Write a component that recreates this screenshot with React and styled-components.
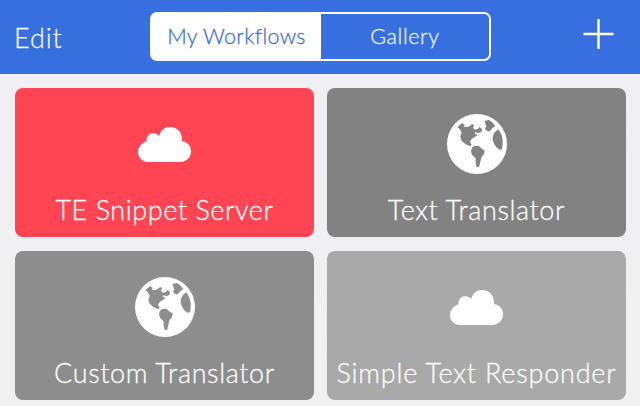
import React from 'react';
import styled, { createGlobalStyle } from 'styled-components';

const GlobalStyle = createGlobalStyle`
  * { box-sizing: border-box; }
  body { margin: 0; background: #f0f0f2; }
`;

const Screen = styled.div`
  width: 640px;
  height: 406px;
  overflow: hidden;
  display: flex;
  flex-direction: column;
  background: linear-gradient(#efeff5, #f0f0f2 60%, #f1f1f1);
  font-family: Lato, 'Liberation Sans', sans-serif;
  font-weight: 300;
  color: #fff;
`;

const NavBar = styled.header`
  flex: none;
  height: 74px;
  padding: 0 26px 0 14px;
  display: grid;
  grid-template-columns: 136px 341px 1fr;
  align-items: start;
  background: #386fde;
  border-bottom: 1px solid #3b69c4;
`;

const TextButton = styled.button`
  padding: 0;
  margin-top: 21px;
  border: 0;
  background: none;
  color: #f1f5fd;
  font: inherit;
  font-size: 27px;
  line-height: 34px;
  letter-spacing: ${(p) => p.$tracking};
  text-align: left;
  -webkit-text-stroke: 0.3px currentColor;
`;

const Segments = styled.div`
  margin-top: 12px;
  height: 49px;
  display: grid;
  grid-template-columns: 169px 168px;
  border: 2px solid #f8faff;
  border-radius: 7px;
`;

const Segment = styled.button`
  padding: 0 0 1px;
  border: 0;
  background: ${(p) => (p.$active ? '#fff' : 'none')};
  color: ${(p) => (p.$active ? '#3f70cf' : '#eaf1fd')};
  font: inherit;
  font-size: 21.5px;
  line-height: 28px;
  letter-spacing: ${(p) => p.$tracking};
  white-space: nowrap;
  -webkit-text-stroke: 0.3px currentColor;
`;

const AddButton = styled.button`
  justify-self: end;
  margin-top: 18px;
  padding: 0;
  border: 0;
  background: none;
  line-height: 0;
`;

const Grid = styled.main`
  padding: 14px 14px 0 15px;
  display: grid;
  grid-template-columns: 299px 299px;
  grid-auto-rows: 149px;
  gap: 14px 13px;
`;

const Card = styled.article`
  display: flex;
  flex-direction: column;
  align-items: center;
  min-width: 0;
  border-radius: 8px;
  background: ${(p) => p.$color};
`;

const IconArea = styled.div`
  height: 104.5px;
  padding-top: 8px;
  display: flex;
  align-items: center;
  justify-content: center;
`;

const CardTitle = styled.h2`
  margin: 0;
  font-size: 27px;
  font-weight: 300;
  line-height: 34px;
  letter-spacing: ${(p) => p.$tracking};
  white-space: nowrap;
  color: #fbfbfb;
  -webkit-text-stroke: 0.3px currentColor;
`;

const Cloud = () => (
  <svg width="53" height="35" viewBox="0 0 159 105" fill="#fff">
    <path d="M30 105C13 105 0 92 0 75C0 61 10 48 26 43C24 29 33 19 46 19C53 19 59 22 63 27C69 9 80 0 96 0C119 0 134 18 132 42C149 44 159 57 159 73C159 91 145 105 128 105Z" />
  </svg>
);

const Globe = ({ land }) => (
  <svg width="60" height="60" viewBox="36 28 180 180">
    <circle cx="126" cy="118" r="90" fill="#fff" />
    <g fill={land}>
      <path d="M67 68L81 55L89 61L86 66L99 67L111 59L118 60L114 69L119 75L128 73L134 67L141 74L140 81L131 85L121 83L119 87L128 91L119 97L110 103L105 111L110 121L105 125L96 120L87 115L79 107L76 96L80 84L74 73Z" />
      <path d="M112 128L120 123L132 124L140 132L149 137L147 148L140 156L136 171L132 188L125 186L122 174L122 161L111 150L108 139Z" />
      <path d="M148 49L161 46L171 52L181 65L173 69L167 77L160 81L150 73L154 65Z" />
      <path d="M190 74C180 80 174 88 173 99C172 111 179 119 184 128L194 135L201 134C206 111 203 91 190 74Z" />
    </g>
  </svg>
);

const Plus = () => (
  <svg width="31" height="32" viewBox="0 0 31 32" fill="none" stroke="#fff" strokeWidth="2.4">
    <path d="M0.5 16H30.5M15.5 1V31" />
  </svg>
);

const workflows = [
  { title: 'TE Snippet Server', color: '#ff4453', icon: 'cloud', tracking: '0.55px' },
  { title: 'Text Translator', color: '#828282', icon: 'globe', tracking: '0.6px' },
  { title: 'Custom Translator', color: '#8d8d8d', icon: 'globe', tracking: '0.6px' },
  { title: 'Simple Text Responder', color: '#a9a9a9', icon: 'cloud', tracking: '0.8px' },
];

export default function App() {
  return (
    <>
      <GlobalStyle />
      <Screen>
        <NavBar>
          <TextButton $tracking="0.9px">Edit</TextButton>
          <Segments>
            <Segment $active $tracking="0.3px">My Workflows</Segment>
            <Segment $tracking="0.6px">Gallery</Segment>
          </Segments>
          <AddButton aria-label="Add workflow"><Plus /></AddButton>
        </NavBar>
        <Grid>
          {workflows.map((w) => (
            <Card key={w.title} $color={w.color}>
              <IconArea>{w.icon === 'cloud' ? <Cloud /> : <Globe land={w.color} />}</IconArea>
              <CardTitle $tracking={w.tracking}>{w.title}</CardTitle>
            </Card>
          ))}
        </Grid>
      </Screen>
    </>
  );
}
